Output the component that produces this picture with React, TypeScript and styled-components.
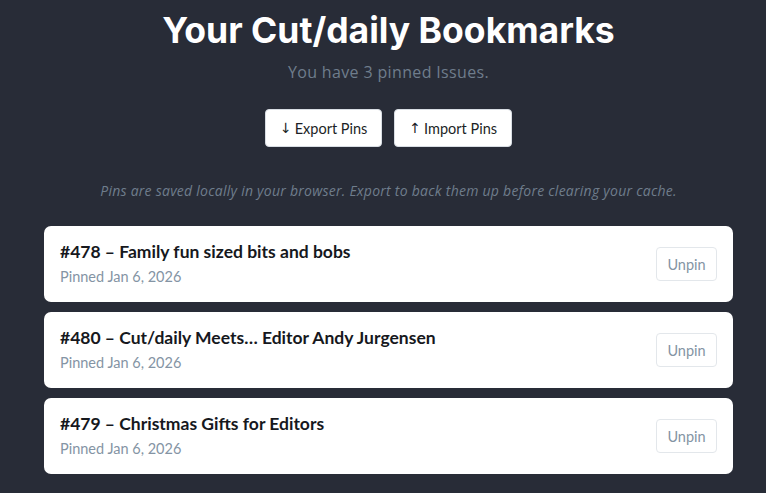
import React from "react";
import styled, { createGlobalStyle } from "styled-components";

const Global = createGlobalStyle`
  html, body { margin: 0; padding: 0; background: #282c37; }
  body { font-family: Lato, "Noto Sans", sans-serif; }
`;

const Page = styled.div`
  width: 766px;
  height: 493px;
  overflow: hidden;
  background: #282c37;
  display: flex;
  flex-direction: column;
  padding-left: 44px;
  box-sizing: border-box;
`;

const Column = styled.div`
  width: 689px;
  display: flex;
  flex-direction: column;
  align-items: center;
`;

const Title = styled.h1`
  margin: 8px 0 0;
  font-family: Inter, sans-serif;
  font-weight: 700;
  font-size: 35.5px;
  letter-spacing: 0;
  line-height: 46px;
  color: #ffffff;
`;

const Subtitle = styled.p`
  margin: 8px 0 0;
  font-family: "Open Sans", sans-serif;
  font-size: 16px;
  line-height: 20px;
  letter-spacing: 0.35px;
  color: #6f7d8c;
`;

const Actions = styled.div`
  display: flex;
  gap: 12px;
  margin-top: 27px;
`;

const ActionButton = styled.button`
  height: 38px;
  padding: 0 14px;
  background: #ffffff;
  border: 1px solid #d8dde3;
  border-radius: 4px;
  font-family: Lato, "Noto Sans", sans-serif;
  font-size: 14.5px;
  color: #1c1f26;
  display: flex;
  align-items: center;
  gap: 3px;
`;

const Arrow = styled.span`
  font-family: "DejaVu Sans", sans-serif;
  font-size: 14px;
  color: #1c1f26;
`;

const Note = styled.p`
  margin: 35px 0 0;
  font-family: "Open Sans", sans-serif;
  font-size: 14px;
  line-height: 18px;
  letter-spacing: 0.25px;
  font-style: italic;
  color: #6f7d8c;
`;

const List = styled.div`
  width: 100%;
  display: flex;
  flex-direction: column;
  gap: 10px;
  margin-top: 26px;
`;

const Card = styled.div`
  height: 76px;
  background: #ffffff;
  border-radius: 7px;
  display: flex;
  align-items: center;
  justify-content: space-between;
  padding: 0 16px;
  box-sizing: border-box;
`;

const CardText = styled.div`
  display: flex;
  flex-direction: column;
  gap: 4px;
`;

const CardTitle = styled.div`
  font-weight: 700;
  font-size: 17.5px;
  line-height: 22px;
  color: #16181d;
`;

const CardDate = styled.div`
  font-size: 14.5px;
  line-height: 20px;
  color: #8494a4;
`;

const Unpin = styled.button`
  width: 61px;
  height: 34px;
  background: #ffffff;
  border: 1px solid #e3e7eb;
  border-radius: 4px;
  font-family: Lato, "Noto Sans", sans-serif;
  font-size: 14.5px;
  color: #8494a4;
`;

const pins = [
  { title: "#478 – Family fun sized bits and bobs", date: "Pinned Jan 6, 2026" },
  { title: "#480 – Cut/daily Meets… Editor Andy Jurgensen", date: "Pinned Jan 6, 2026" },
  { title: "#479 – Christmas Gifts for Editors", date: "Pinned Jan 6, 2026" },
];

export default function App() {
  return (
    <>
      <Global />
      <Page>
        <Column>
          <Title>Your Cut/daily Bookmarks</Title>
          <Subtitle>You have 3 pinned Issues.</Subtitle>
          <Actions>
            <ActionButton>
              <Arrow>↓</Arrow> Export Pins
            </ActionButton>
            <ActionButton>
              <Arrow>↑</Arrow> Import Pins
            </ActionButton>
          </Actions>
          <Note>Pins are saved locally in your browser. Export to back them up before clearing your cache.</Note>
          <List>
            {pins.map((p) => (
              <Card key={p.title}>
                <CardText>
                  <CardTitle>{p.title}</CardTitle>
                  <CardDate>{p.date}</CardDate>
                </CardText>
                <Unpin>Unpin</Unpin>
              </Card>
            ))}
          </List>
        </Column>
      </Page>
    </>
  );
}
